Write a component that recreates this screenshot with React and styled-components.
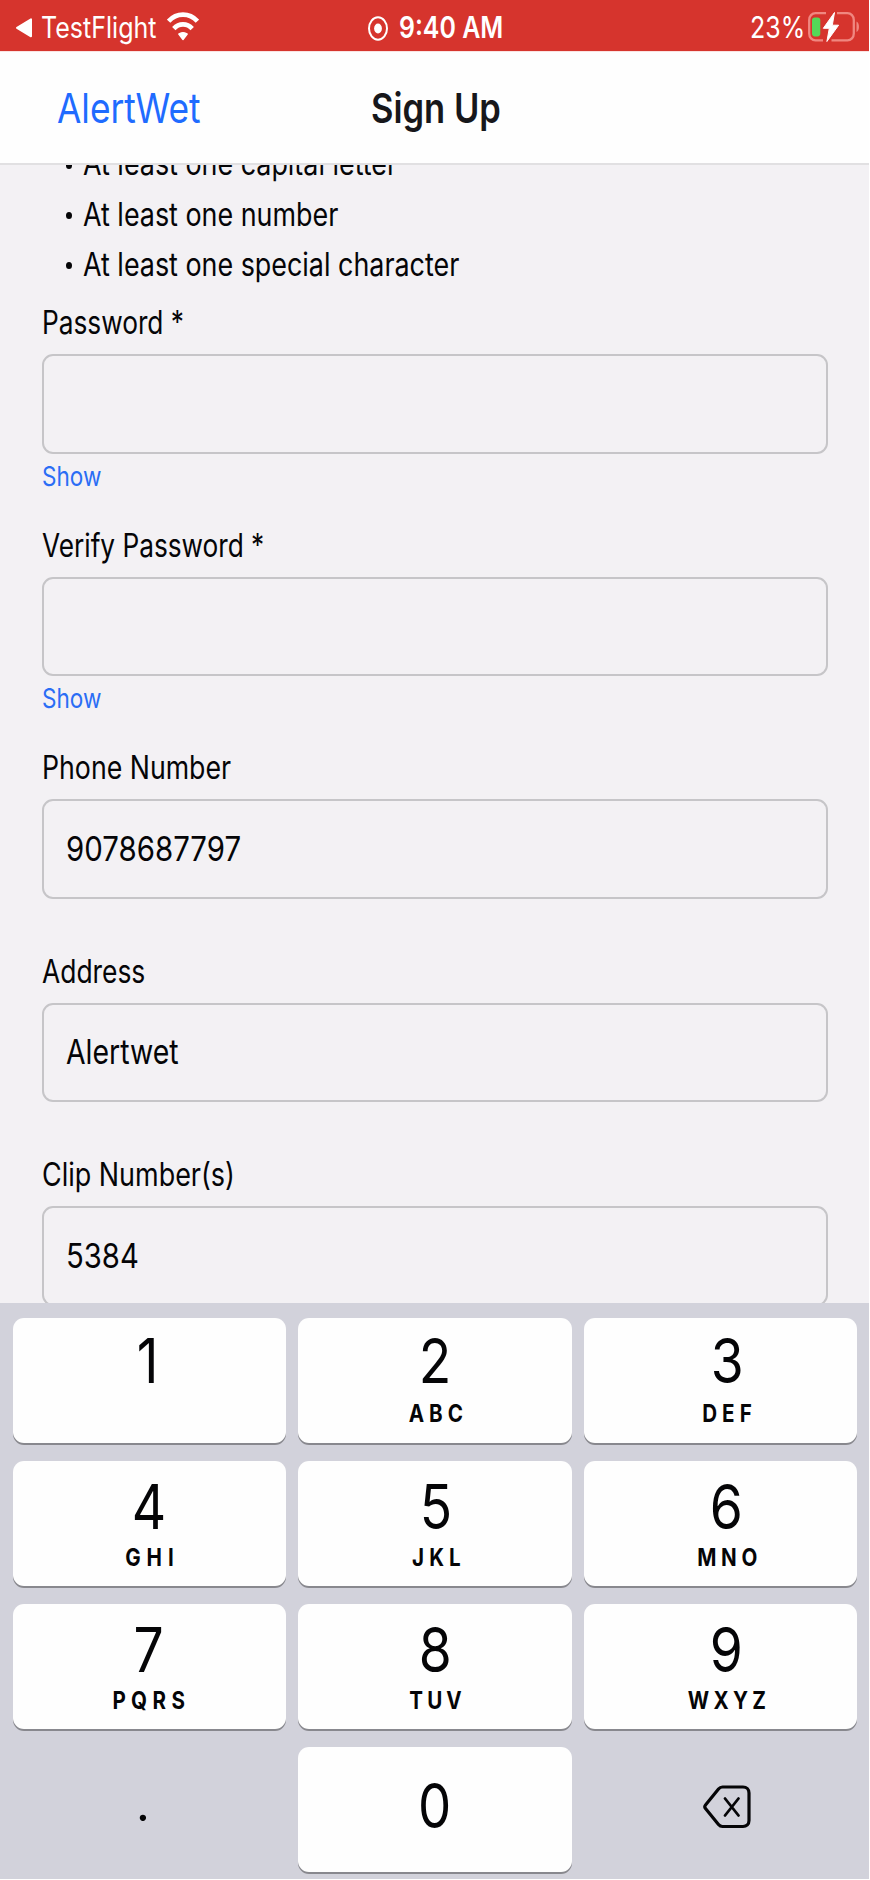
import React from 'react';
import styled, { createGlobalStyle } from 'styled-components';

const GlobalStyle = createGlobalStyle`
  * { box-sizing: border-box; }
  html, body { margin: 0; background: #fff; }
  body { font-family: Inter, "Liberation Sans", sans-serif; color: #050507; overflow: hidden; }
  svg { flex: none; }
`;

const Screen = styled.main`
  width: 869px;
  height: 1879px;
  display: flex;
  flex-direction: column;
  overflow: hidden;
  background: #f3f1f4;
`;

/* Narrow lettering: glyphs are squeezed horizontally around the given origin. */
const Narrow = styled.span`
  display: block;
  white-space: nowrap;
  transform: scaleX(${(p) => p.$k || 0.838});
  transform-origin: ${(p) => p.$origin || 'left'} center;
`;

const StatusBar = styled.header`
  flex: none;
  height: 51px;
  display: grid;
  grid-template-columns: 1fr auto 1fr;
  align-items: center;
  background: #d6342d;
  color: #fff;
  font-size: 29.5px;
  line-height: 51px;
`;

const StatusLeft = styled.div`
  display: flex;
  align-items: center;
  padding-left: 15px;
`;

const BackApp = styled.div`
  width: 126px;
  margin-left: 8.4px;
  padding-top: 2px;
`;

const StatusCenter = styled.div`
  display: flex;
  align-items: center;
  gap: 9.8px;
`;

const Clock = styled.div`
  width: 103.8px;
  padding-top: 2px;
  font-weight: 600;
`;

const StatusRight = styled.div`
  display: flex;
  align-items: center;
  justify-content: flex-end;
  padding-right: 9px;
`;

const Percent = styled.div`
  width: 58px;
  padding-top: 2px;
`;

const NavBar = styled.nav`
  flex: none;
  height: 114px;
  display: grid;
  grid-template-columns: 370.5px 1fr;
  align-items: center;
  padding-top: 1px;
  background: #fefefe;
  border-top: 1px solid #fbe3e2;
  border-bottom: 2px solid #e1e0e2;
  font-size: 41px;
  line-height: 54px;
`;

const BackLink = styled.a`
  padding-left: 57.4px;
  color: #1f6bff;
`;

const Title = styled.h1`
  margin: 0;
  font-size: inherit;
  font-weight: 600;
  color: #17171b;
`;

const Form = styled.section`
  flex: 1;
  min-height: 0;
  overflow: hidden;
  padding: 0 41px 0 42px;
  font-size: 32px;
`;

const Rules = styled.ul`
  list-style: none;
  margin: -25.7px 0 13.4px;
  padding: 0 0 0 24px;
`;

const Rule = styled.li`
  display: flex;
  align-items: center;
  height: 50.2px;
  line-height: 50.2px;
`;

const Bullet = styled.i`
  flex: none;
  width: 6px;
  height: 7px;
  margin: 2px 11px 0 0.4px;
  border-radius: 50%;
  background: #050507;
`;

const Group = styled.div`
  height: ${(p) => (p.$tall ? 222.4 : 203.5)}px;
`;

const Label = styled.label`
  display: block;
  height: 40px;
  margin-bottom: 11.2px;
  line-height: 40px;
`;

const Field = styled.div`
  height: 99.4px;
  display: flex;
  align-items: center;
  padding-left: 21.6px;
  border: 2px solid #c6c5c8;
  border-radius: 11px;
  font-size: 34.5px;
  line-height: 48px;
`;

const Show = styled.a`
  display: block;
  margin-top: 4px;
  font-size: 27.5px;
  line-height: 36px;
  color: #2a6df5;
`;

const Keypad = styled.section`
  flex: none;
  height: 576px;
  display: grid;
  grid-template-columns: repeat(3, 1fr);
  grid-auto-rows: 125px;
  gap: 18px 12.4px;
  padding: 15px 11.7px 0 12.7px;
  background: #d2d2db;
`;

const Key = styled.div`
  display: flex;
  flex-direction: column;
  align-items: center;
  padding: ${(p) => p.$top}px ${(p) => p.$right || 0}px 0 ${(p) => p.$left || 0}px;
  border-radius: 11px;
  background: #fefefe;
  box-shadow: 0 2px 0 #88888e;
`;

const BareKey = styled.div`
  display: flex;
  justify-content: center;
`;

const PeriodKey = styled(BareKey)`
  padding: 24px 13px 0 0;
  font: 50px/62px Lato, sans-serif;
`;

const DeleteKey = styled(BareKey)`
  align-items: center;
  padding: 0 0 5px 12.6px;
`;

const Digit = styled.div`
  font-size: 62px;
  line-height: 62px;
`;

const Letters = styled.div`
  margin-top: ${(p) => p.$gap}px;
  padding-left: ${(p) => p.$spacing}px;
  letter-spacing: ${(p) => p.$spacing}px;
  font-size: 24.5px;
  font-weight: 650;
  line-height: 26px;
`;

const rules = ['At least one capital letter', 'At least one number', 'At least one special character'];

const fields = [
  { label: 'Password *', k: 0.82, secret: true },
  { label: 'Verify Password *', k: 0.819, secret: true },
  { label: 'Phone Number', k: 0.835, value: '9078687797', vk: 0.853 },
  { label: 'Address', k: 0.825, value: 'Alertwet', vk: 0.824 },
  { label: 'Clip Number(s)', k: 0.842, value: '5384', vk: 0.848 },
];

const keys = [
  { digit: '1', top: 12.4, right: 2.5 },
  { digit: '2', letters: 'ABC', spacing: 6, top: 12.4 },
  { digit: '3', letters: 'DEF', spacing: 6, top: 12.4, left: 12 },
  { digit: '4', letters: 'GHI', spacing: 7.1, top: 14.8, right: 1.5 },
  { digit: '5', letters: 'JKL', spacing: 6, top: 14.8, left: 1 },
  { digit: '6', letters: 'MNO', spacing: 5.6, top: 14.8, left: 12 },
  { digit: '7', letters: 'PQRS', spacing: 6.4, top: 14.8, right: 1.5 },
  { digit: '8', letters: 'TUV', spacing: 4.8, top: 14.8 },
  { digit: '9', letters: 'WXYZ', spacing: 5.1, top: 14.8, left: 12 },
];

const WifiIcon = () => (
  <svg width="32" height="29" viewBox="0 0 32 29" fill="none" stroke="#fff">
    <path d="M1.6 9.2C9.5 .4 22.5 .4 30.4 9.2" strokeWidth="4.6" />
    <path d="M6.8 16.6c5.2-5.6 13.2-5.6 18.400 0" strokeWidth="4.6" />
    <path d="M16 27.5l-4.200-5.400c2.300-2 6.100-2 8.400 0z" fill="#fff" strokeWidth="1.4" strokeLinejoin="round" />
  </svg>
);

const BatteryIcon = () => (
  <svg width="52" height="32" viewBox="0 0 52 32">
    <g fill="none" stroke="#f08780" strokeWidth="2.3">
      <path d="M18 2.200H7.500C4 2.200 1.200 5 1.200 9v13.500c0 4 2.800 6.800 6.300 6.800H15" />
      <path d="M29 2.200h10.500c3.500 0 6.300 2.800 6.300 6.800v13.500c0 4-2.800 6.800-6.300 6.800H23.500" />
    </g>
    <path d="M48.500 10.500c3.300 1.500 3.300 9 0 10.500z" fill="#f08780" />
    <rect x="4" y="6.4" width="8.3" height="19" rx="2.8" fill="#54d858" />
    <path d="M26.500 1.500 15.300 17.300h6L18.900 30.500 30.600 14.200h-6.300z" fill="#fff" stroke="#fff" strokeLinejoin="round" />
  </svg>
);

export default function App() {
  return (
    <>
      <GlobalStyle />
      <Screen>
        <StatusBar>
          <StatusLeft>
            <svg width="18" height="22" viewBox="0 0 18 22">
              <path d="M2 11.800 16 3.300v17z" fill="#fff" stroke="#fff" strokeWidth="2" strokeLinejoin="round" />
            </svg>
            <BackApp><Narrow $k={0.849}>TestFlight</Narrow></BackApp>
            <WifiIcon />
          </StatusLeft>
          <StatusCenter>
            <svg width="22" height="28" viewBox="0 0 22 28">
              <ellipse cx="11" cy="15.5" rx="9" ry="11.2" fill="none" stroke="#fff" strokeWidth="2" />
              <ellipse cx="11" cy="15.5" rx="3.9" ry="4.9" fill="#fff" />
            </svg>
            <Clock><Narrow $k={0.844}>9:40 AM</Narrow></Clock>
          </StatusCenter>
          <StatusRight>
            <Percent><Narrow $k={0.847}>23%</Narrow></Percent>
            <BatteryIcon />
          </StatusRight>
        </StatusBar>
        <NavBar>
          <BackLink><Narrow $k={0.861}>AlertWet</Narrow></BackLink>
          <Title><Narrow $k={0.842}>Sign Up</Narrow></Title>
        </NavBar>
        <Form>
          <Rules>
            {rules.map((r) => (
              <Rule key={r}><Bullet /><Narrow $k={0.84}>{r}</Narrow></Rule>
            ))}
          </Rules>
          {fields.map((f) => (
            <Group key={f.label} $tall={f.secret}>
              <Label><Narrow $k={f.k}>{f.label}</Narrow></Label>
              <Field>{f.value && <Narrow $k={f.vk}>{f.value}</Narrow>}</Field>
              {f.secret && <Show><Narrow $k={0.82}>Show</Narrow></Show>}
            </Group>
          ))}
        </Form>
        <Keypad>
          {keys.map((k) => (
            <Key key={k.digit} $top={k.top} $left={k.left} $right={k.right}>
              <Digit><Narrow $k={0.86} $origin="center">{k.digit}</Narrow></Digit>
              {k.letters && (
                <Letters $gap={k.top < 14 ? 8 : 6} $spacing={k.spacing}>
                  <Narrow $k={0.84} $origin="center">{k.letters}</Narrow>
                </Letters>
              )}
            </Key>
          ))}
          <PeriodKey>.</PeriodKey>
          <Key $top={28.4}><Digit><Narrow $k={0.85} $origin="center">0</Narrow></Digit></Key>
          <DeleteKey>
            <svg width="48" height="44" viewBox="0 0 48 44" fill="none" stroke="#050507" strokeWidth="3.2" strokeLinejoin="round" strokeLinecap="round">
              <path d="M19.500 2H40c3.500 0 6 2.500 6 6v27.500c0 3.500-2.500 6-6 6H19.500c-1.700 0-3-.8-4-2L2.500 23.500c-1-1.200-1-2.300 0-3.500l13-16c1-1.200 2.300-2 4-2z" />
              <path d="M22 13.500l13.500 17M35.500 13.500 22 30.500" strokeWidth="2.8" />
            </svg>
          </DeleteKey>
        </Keypad>
      </Screen>
    </>
  );
}
